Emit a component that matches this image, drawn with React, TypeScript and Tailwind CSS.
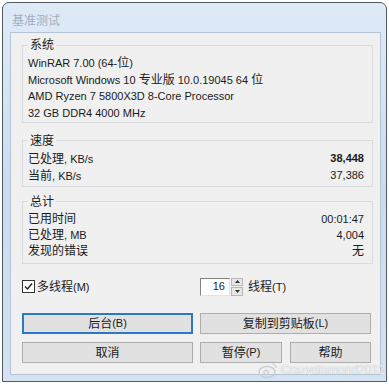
import type { ReactNode } from 'react';

const cjkRun = /[\u3000-\u9fff\uff00-\uffef]/;

// CJK glyphs in the dialog are a touch larger than the Latin text
function T({ s }: { s: string }) {
  const parts = s.match(/[\u3000-\u9fff\uff00-\uffef]+|[^\u3000-\u9fff\uff00-\uffef]+/g) ?? [];
  return (
    <>
      {parts.map((p, i) =>
        cjkRun.test(p) ? (
          <span key={i} className="text-[12px]">
            {p}
          </span>
        ) : (
          <span key={i}>{p}</span>
        ),
      )}
    </>
  );
}

function Group({
  title,
  tall,
  className,
  children,
}: {
  title: string;
  tall?: boolean;
  className: string;
  children: ReactNode;
}) {
  return (
    <div className={`border border-[#d9dcdf] pl-[5px] pr-[8px] ${className}`}>
      <div
        className={`-mt-[9px] w-fit bg-[#f0f0f0] px-[2px] ${
          tall ? 'h-[18px] leading-[18px]' : 'h-[17px] leading-[17px]'
        }`}
      >
        <T s={title} />
      </div>
      {children}
    </div>
  );
}

function Row({ label, value, bold, h16 }: { label: string; value?: string; bold?: boolean; h16?: boolean }) {
  return (
    <div className={`flex items-center justify-between ${h16 ? 'h-[16px]' : 'h-[17px]'}`}>
      <span>
        <T s={label} />
      </span>
      {value && (
        <span className={bold ? 'font-bold' : ''}>
          <T s={value} />
        </span>
      )}
    </div>
  );
}

function Btn({ label, focused }: { label: string; focused?: boolean }) {
  return (
    <div
      className={`flex h-[21px] items-center justify-center bg-[#e1e1e1] ${
        focused ? 'border-2 border-[#2b78c8]' : 'border border-[#adadad]'
      }`}
    >
      <T s={label} />
    </div>
  );
}

export default function App() {
  return (
    <div className="h-[384px] w-[389px] overflow-hidden bg-white pt-[2px] font-['Liberation_Sans','Noto_Sans_CJK_SC',sans-serif] text-[11px] text-[#1a1a1a]">
      <div className="relative ml-[2px] flex h-[380px] w-[385px] flex-col rounded-t-[7px] border border-[#505a66] bg-gradient-to-b from-[#dfeaf7] via-[#cbdcef] to-[#d4e2f1] pb-[6px] pl-[7px] pr-[5px]">
        {/* Title bar */}
        <div className="flex h-[29px] items-center pl-[2px] pt-[6px] text-[12px] text-[#a3aebb]">基准测试</div>

        {/* Client area */}
        <div className="flex flex-1 flex-col border border-[#b3c4d6] bg-[#f0f0f0] pl-[11px] pr-[7px] pt-[11px]">
          <Group title="系统" className="mt-[1px] pb-0">
            <Row label="WinRAR 7.00 (64-位)" />
            <Row label="Microsoft Windows 10 专业版 10.0.19045 64 位" />
            <Row label="AMD Ryzen 7 5800X3D 8-Core Processor" />
            <Row label="32 GB DDR4 4000 MHz" />
          </Group>

          <Group title="速度" tall className="mt-[17px] pb-[2px]">
            <Row label="已处理, KB/s" value="38,448" bold />
            <Row label="当前, KB/s" value="37,386" />
          </Group>

          <Group title="总计" tall className="mt-[14px] pb-[4px]">
            <Row label="已用时间" value="00:01:47" h16 />
            <Row label="已处理, MB" value="4,004" h16 />
            <Row label="发现的错误" value="无" h16 />
          </Group>

          {/* Threads row */}
          <div className="mt-[13px] grid h-[19px] grid-cols-[171px_171px] gap-x-[7px]">
            <div className="flex items-center">
              <div className="flex h-[13px] w-[13px] items-center justify-center border border-[#333] bg-white">
                <svg width="9" height="9" viewBox="0 0 9 9">
                  <path d="M1 4.5 L3.5 7 L8 1.5" fill="none" stroke="#222" strokeWidth="1.4" />
                </svg>
              </div>
              <span className="ml-[2px]">
                <T s="多线程(M)" />
              </span>
            </div>
            <div className="flex items-center">
              <div className="flex h-[18px] w-[30px] items-center justify-end border border-b-[#e3e3e3] border-l-[#828282] border-r-[#e3e3e3] border-t-[#828282] bg-white pr-[4px]">
                16
              </div>
              <div className="ml-[1px] flex h-[18px] w-[12px] flex-col gap-px">
                <div className="flex flex-1 items-center justify-center border border-[#b8b8b8] bg-[#e6e6e6]">
                  <svg width="5" height="3" viewBox="0 0 5 3">
                    <path d="M0 3 L2.5 0 L5 3 Z" fill="#333" />
                  </svg>
                </div>
                <div className="flex flex-1 items-center justify-center border border-[#b8b8b8] bg-[#e6e6e6]">
                  <svg width="5" height="3" viewBox="0 0 5 3">
                    <path d="M0 0 L5 0 L2.5 3 Z" fill="#333" />
                  </svg>
                </div>
              </div>
              <span className="ml-[5px]">
                <T s="线程(T)" />
              </span>
            </div>
          </div>

          {/* Buttons */}
          <div className="mt-[17px] grid grid-cols-[171px_171px] gap-x-[7px] gap-y-[8px]">
            <Btn label="后台(B)" focused />
            <Btn label="复制到剪贴板(L)" />
            <Btn label="取消" />
            <div className="grid grid-cols-[82px_81px] gap-x-[8px]">
              <Btn label="暂停(P)" />
              <Btn label="帮助" />
            </div>
          </div>
        </div>

        {/* Watermark */}
        <div className="absolute bottom-[2px] right-[1px] flex items-center gap-[3px] text-[12px] text-white/80 [text-shadow:0_0_1px_#9aa3ad]">
          <svg width="20" height="16" viewBox="0 0 20 16">
            <ellipse cx="9" cy="10" rx="8" ry="5.5" fill="none" stroke="#c9ced4" strokeWidth="1.4" />
            <circle cx="8" cy="10.5" r="2.2" fill="none" stroke="#c9ced4" strokeWidth="1.2" />
            <path d="M14 2 A4 4 0 0 1 18 6" fill="none" stroke="#c9ced4" strokeWidth="1.2" />
          </svg>
          <span>Crazydiamond2012</span>
        </div>
      </div>
    </div>
  );
}
